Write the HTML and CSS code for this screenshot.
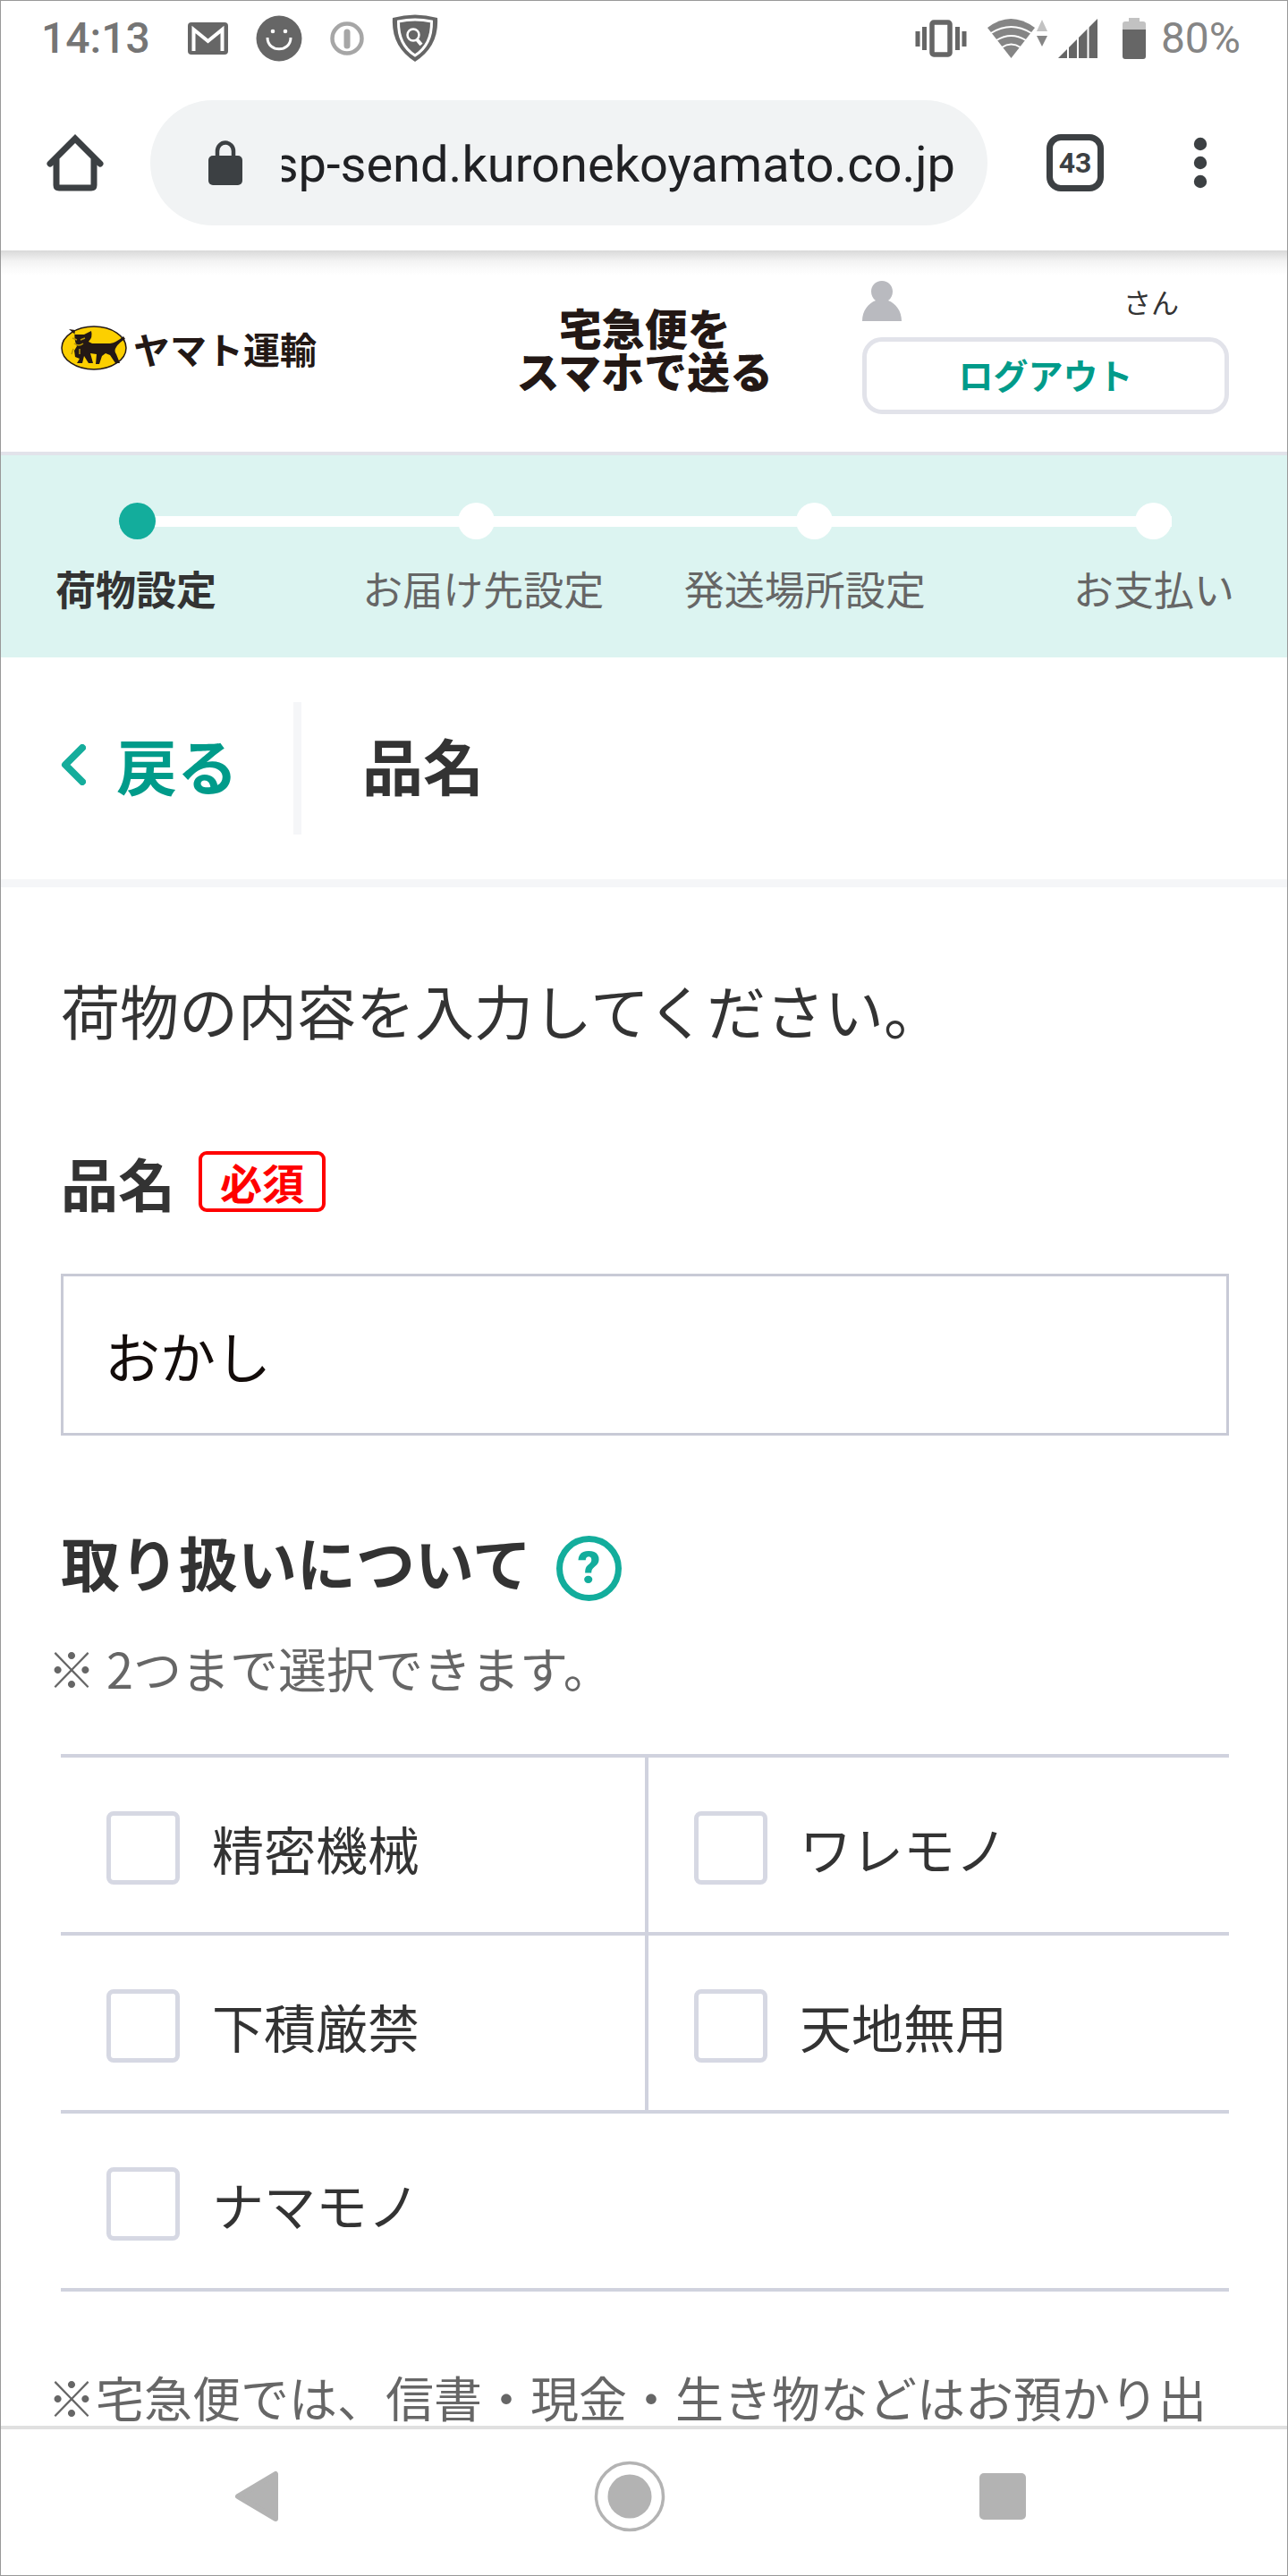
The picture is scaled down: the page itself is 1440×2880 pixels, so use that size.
FILE: index.html
```html
<!DOCTYPE html>
<html lang="ja">
<head>
<meta charset="utf-8">
<meta name="viewport" content="width=device-width, initial-scale=1">
<title>品名 | 宅急便をスマホで送る</title>
<link rel="stylesheet" href="styles.css">
</head>
<body>
<div class="screen">
  <div class="status">
    <span class="status-time">14:13</span>
    <div class="status-apps">
      <svg width="45" height="36" viewBox="0 0 45 36"><rect width="45" height="36" rx="4" fill="#666"/><path d="M6.500 32V8L22.500 21L38.500 8V32" fill="none" stroke="#fff" stroke-width="4"/></svg>
      <svg width="52" height="52" viewBox="0 0 52 52"><circle cx="26" cy="26" r="25.500" fill="#666"/><circle cx="19" cy="18" r="2.300" fill="#fff"/><circle cx="33" cy="18" r="2.300" fill="#fff"/><path d="M13 25c0 17 26 17 26 0" fill="none" stroke="#fff" stroke-width="3"/></svg>
      <svg width="38" height="38" viewBox="0 0 38 38"><circle cx="19" cy="19" r="16.500" fill="none" stroke="#a6a6a6" stroke-width="4.500"/><path d="M19 12v15" stroke="#a6a6a6" stroke-width="7" stroke-linecap="round"/></svg>
      <svg width="52" height="54" viewBox="0 0 52 54"><path d="M1 4Q26-3 51 4Q53 36 26 53Q-1 36 1 4Z" fill="#666"/><path d="M7.500 8Q26 4 44.500 8Q45 34 26 46Q7 34 7.500 8Z" fill="#666" stroke="#fff" stroke-width="3"/><circle cx="24" cy="23" r="6.500" fill="none" stroke="#fff" stroke-width="2.500"/><path d="M28 28l5 6" stroke="#fff" stroke-width="4"/></svg>
    </div>
    <div class="status-system">
      <svg width="58" height="42" viewBox="0 0 58 42"><path d="M3 13v17M10.500 8v26M47.500 8v26M55 13v17" stroke="#666" stroke-width="5"/><rect x="19" y="3" width="20" height="36" rx="2" fill="none" stroke="#666" stroke-width="5.500"/></svg>
      <svg class="wifi" width="68" height="46" viewBox="0 0 68 46"><path d="M0 11Q26-9 53 11L26.500 45Z" fill="#858585"/><path d="M4 17Q26.500 3 49 17M10 25Q26.500 15 43 25M16 33Q26.500 26 37 33" fill="none" stroke="#fff" stroke-width="2"/><path d="M55 15L61 2l6 13Z" fill="#c2c2c2"/><path d="M55 20h12l-6 12Z" fill="#858585"/></svg>
      <svg class="signal" width="45" height="44" viewBox="0 0 45 44"><path d="M0 44L44 0V44Z" fill="#666"/><path d="M11 24v20M22 14v30M33.500 4v40" stroke="#fff" stroke-width="2"/></svg>
      <svg class="battery" width="26" height="46" viewBox="0 0 26 46"><path d="M7 0h12v4h4q3 0 3 3v7H0V7q0-3 3-3h4Z" fill="#c2c2c2"/><path d="M0 13h26v30q0 3-3 3H3q-3 0-3-3Z" fill="#666"/></svg>
      <span class="status-level">80%</span>
    </div>
  </div>

  <div class="toolbar">
    <button class="tool" type="button" aria-label="ホーム"><svg width="64" height="64" viewBox="0 0 64 64"><path d="M4 33L32 5l28 28M11 27v30q0 3 3 3h36q3 0 3-3V27" fill="none" stroke="#3c4043" stroke-width="7" stroke-linecap="round"/></svg></button>
    <div class="omnibox">
      <svg width="38" height="50" viewBox="0 0 38 50"><rect y="17" width="38" height="33" rx="5" fill="#3c4043"/><path d="M10 18v-6a9 9.500 0 0 1 18 0v6" fill="none" stroke="#3c4043" stroke-width="4.500"/></svg>
      <div class="url"><span>sp-send.kuronekoyamato.co.jp</span></div>
    </div>
    <button class="tabs" type="button" aria-label="タブ 43">43</button>
    <button class="tool menu" type="button" aria-label="メニュー"><svg width="16" height="78" viewBox="0 0 16 78"><g fill="#3c4043"><circle cx="8" cy="18" r="7.200"/><circle cx="8" cy="39" r="7.200"/><circle cx="8" cy="60" r="7.200"/></g></svg></button>
  </div>

  <header class="site-header">
    <a class="brand" href="#">
      <svg width="74" height="50" viewBox="0 0 74 50"><ellipse cx="37" cy="25" rx="36" ry="24" fill="#fccf00" stroke="#231815" stroke-width="1.500"/><path d="M9 4l7 6h10l8-4q2 7-3 12l4 2h20q7-1 15-8l2 3q-7 4-10 9-3 4 0 8l4 10h-5l-6-9-5-2-4 3-3 9h-4l1-11-7-1 3 11h-5l-5-8-2 8h-6l3-5-5-2-1-7 3-5q-4-8-2-18Z" fill="#231815"/><path d="M13 14l5 2M22 16l5-2M15 20q5 4 10 0M14 26l-2 6M21 26v6" fill="none" stroke="#b89505" stroke-width="1.500"/></svg>
      <span>ヤマト運輸</span>
    </a>
    <div class="slogan">宅急便を<br>スマホで送る</div>
    <div class="account">
      <div class="user">
        <svg width="44" height="45" viewBox="0 0 44 45"><path d="M22 0c7 0 12 5 12 12 0 4-2 8-5 10 8 3 15 11 15 23H0c0-12 7-20 15-23-3-2-5-6-5-10C10 5 15 0 22 0Z" fill="#b9babf"/></svg>
        <span>さん</span>
      </div>
      <button class="logout" type="button">ログアウト</button>
    </div>
  </header>

  <nav class="steps" aria-label="進行状況">
    <div class="track"><i class="dot dot-on"></i><i class="dot"></i><i class="dot"></i><i class="dot"></i></div>
    <ol class="step-names">
      <li aria-current="step">荷物設定</li>
      <li>お届け先設定</li>
      <li>発送場所設定</li>
      <li>お支払い</li>
    </ol>
  </nav>

  <div class="title-bar">
    <a class="back" href="#"><svg width="28" height="46" viewBox="0 0 28 46"><path d="M24 4L5 23l19 19" fill="none" stroke="#15ad9c" stroke-width="8" stroke-linecap="round" stroke-linejoin="round"/></svg>戻る</a>
    <h1>品名</h1>
  </div>

  <main class="form">
    <p class="lead">荷物の内容を入力してください。</p>
    <div class="field-head"><label for="item">品名</label><span class="required">必須</span></div>
    <input class="text-input" id="item" type="text" value="おかし">
    <div class="handling-head"><h2>取り扱いについて</h2><button class="help" type="button" aria-label="ヘルプ">?</button></div>
    <p class="note">※ 2つまで選択できます。</p>
    <div class="options">
      <label class="option"><input type="checkbox">精密機械</label>
      <label class="option"><input type="checkbox">ワレモノ</label>
      <label class="option"><input type="checkbox">下積厳禁</label>
      <label class="option"><input type="checkbox">天地無用</label>
      <label class="option option-wide"><input type="checkbox">ナマモノ</label>
    </div>
    <p class="note note-last">※宅急便では、信書・現金・生き物などはお預かり出</p>
  </main>

  <div class="system-nav">
    <button class="tool" type="button" aria-label="戻る"><svg width="50" height="58" viewBox="0 0 50 58"><path d="M46 4V54L4 29Z" fill="#b3b3b3" stroke="#b3b3b3" stroke-width="6" stroke-linejoin="round"/></svg></button>
    <button class="tool" type="button" aria-label="ホーム画面"><svg width="80" height="80" viewBox="0 0 80 80"><circle cx="40" cy="40" r="37.500" fill="none" stroke="#b3b3b3" stroke-width="3.500"/><circle cx="40" cy="40" r="24.500" fill="#b3b3b3"/></svg></button>
    <button class="tool" type="button" aria-label="履歴"><svg width="52" height="52" viewBox="0 0 52 52"><rect width="52" height="52" rx="5" fill="#b3b3b3"/></svg></button>
  </div>
</div>
</body>
</html>
```
FILE: styles.css
```css
* { box-sizing: border-box; }
body {
  margin: 0;
  background: #fff;
  color: #333;
  font-family: "Noto Sans CJK JP", sans-serif;
}
button, input { font: inherit; color: inherit; }
button { cursor: pointer; }
svg { display: block; flex: none; }
h1, h2, p, ol { margin: 0; padding: 0; }
a { text-decoration: none; color: inherit; }

.screen {
  display: flex;
  flex-direction: column;
  min-height: 100vh;
  border: 1px solid #999;
}
.tool { display: flex; padding: 0; border: 0; background: none; }

/* Phone status bar */
.status {
  display: flex;
  align-items: center;
  height: 84px;
  padding: 0 52px 0 45px;
  font: 500 48px/56px Roboto, sans-serif;
  color: #757575;
}
.status-apps { display: flex; align-items: center; gap: 31px; margin-left: 42px; }
.status-system { display: flex; align-items: center; margin-left: auto; }
.wifi { margin-left: 23px; }
.signal { margin-left: 11px; }
.battery { margin-left: 27px; }
.status-level { margin-left: 17px; font-weight: 400; color: #858585; }

/* Browser toolbar */
.toolbar {
  display: flex;
  align-items: center;
  padding: 27px 89px 28px 51px;
}
.omnibox {
  display: flex;
  flex: 1;
  align-items: center;
  gap: 44px;
  min-width: 0;
  height: 140px;
  margin: 0 66px 0 52px;
  padding: 0 36px 0 65px;
  border-radius: 70px;
  background: #f1f3f4;
}
.url {
  display: flex;
  flex: 1;
  justify-content: flex-end;
  min-width: 0;
  overflow: hidden;
  white-space: nowrap;
  padding-top: 4px;
  font: 400 56px/72px Roboto, sans-serif;
  color: #202124;
}
.tabs {
  width: 64px;
  height: 64px;
  padding: 0;
  border: 7px solid #3c4043;
  border-radius: 16px;
  background: none;
  font: 700 32px/48px Roboto, sans-serif;
  color: #3c4043;
}
.menu { margin-left: 100px; }

/* Site header */
.site-header {
  display: flex;
  align-items: center;
  height: 229px;
  padding: 0 65px 8px 67px;
  border-bottom: 4px solid #e2e3ea;
  background: linear-gradient(#d9d9d9, #f3f3f3 12px, #fafafa 20px, #fff 28px);
  color: #231815;
}
.brand {
  display: flex;
  align-items: center;
  gap: 7px;
  font-size: 41px;
  font-weight: 700;
  line-height: 48px;
}
.slogan {
  margin: 0 100px 0 auto;
  font-size: 48px;
  font-weight: 900;
  line-height: 48px;
  text-align: center;
}
.account { width: 410px; color: #333; }
.user {
  display: flex;
  align-items: center;
  justify-content: space-between;
  padding-right: 56px;
  font-size: 31px;
  line-height: 45px;
}
.logout {
  width: 100%;
  height: 86px;
  margin-top: 18px;
  padding: 0 0 4px;
  border: 5px solid #e2e3ea;
  border-radius: 22px;
  background: #fff;
  font-size: 39px;
  font-weight: 700;
  line-height: 56px;
  color: #009b8a;
}

/* Progress steps */
.steps { padding: 53px 0 41px; background: #dcf4f1; }
.track {
  display: flex;
  justify-content: space-between;
  margin: 0 129px 0 132px;
  background: linear-gradient(#fff, #fff) center / 100% 12px no-repeat;
}
.dot { width: 41px; height: 41px; border-radius: 50%; background: #fff; }
.dot-on { background: #13ad9c; }
.step-names {
  display: grid;
  grid-template-columns: repeat(4, 1fr);
  margin-top: 19px;
  padding: 0;
  list-style: none;
  font-size: 45px;
  line-height: 72px;
  text-align: center;
  color: #666;
}
.step-names li:first-child { padding-left: 61px; text-align: left; font-weight: 700; color: #333; }
.step-names li:last-child { padding-right: 59px; text-align: right; }

/* Title bar */
.title-bar {
  display: flex;
  align-items: center;
  padding: 50px 67px;
  border-bottom: 9px solid #f5f6f8;
  font-size: 68px;
  line-height: 140px;
}
.back {
  display: flex;
  align-items: center;
  gap: 34px;
  padding: 0 62px 8px 0;
  border-right: 9px solid #f5f6f8;
  font-weight: 700;
  color: #009b8a;
}
h1 { padding: 0 0 8px 68px; font-size: 68px; font-weight: 700; }

/* Form */
.form { flex: 1; padding: 88px 65px 0 67px; }
.lead { font-size: 66px; line-height: 96px; }
.field-head {
  display: flex;
  align-items: center;
  gap: 26px;
  margin-top: 101px;
  font-size: 64px;
  font-weight: 700;
  line-height: 88px;
}
.required {
  padding: 0 20px;
  border: 4px solid #f00;
  border-radius: 9px;
  font-size: 47px;
  line-height: 60px;
  color: #f00;
}
.text-input {
  display: block;
  width: 100%;
  height: 181px;
  margin-top: 59px;
  padding: 0 46px;
  border: 3px solid #c8cad6;
  border-radius: 0;
  background: #fff;
  font-size: 62px;
  color: #130c0a;
}
.handling-head { display: flex; align-items: center; gap: 28px; margin-top: 100px; }
h2 { padding-bottom: 16px; font-size: 66px; font-weight: 700; line-height: 80px; }
.help {
  width: 73px;
  height: 73px;
  padding: 0;
  border: 7px solid #13ad9c;
  border-radius: 50%;
  background: none;
  font: 900 50px/59px Roboto, sans-serif;
  color: #13ad9c;
}
.note { margin: 24px -10px 0 -15px; font-size: 54px; line-height: 80px; color: #666; }
.options {
  display: grid;
  grid-template-columns: 1fr 1fr;
  margin-top: 56px;
  border-top: 4px solid #d0d2de;
}
.option {
  display: flex;
  align-items: center;
  gap: 36px;
  height: 199px;
  padding: 6px 51px 0;
  border-bottom: 4px solid #d0d2de;
  font-size: 58px;
  line-height: 84px;
}
.option:nth-child(even) { border-left: 4px solid #d0d2de; }
.option-wide { grid-column: 1 / -1; }
.option input {
  appearance: none;
  width: 82px;
  height: 82px;
  margin: 0;
  border: 5px solid #d6d8e3;
  border-radius: 8px;
  background: #fff;
}
.note-last { margin-top: 90px; line-height: 56px; }

/* Phone navigation keys */
.system-nav {
  display: grid;
  grid-template-columns: repeat(3, 1fr);
  place-items: center;
  height: 167px;
  padding: 0 110px 14px 78px;
  border-top: 4px solid #e0e0e0;
  background: #fff;
}
```
